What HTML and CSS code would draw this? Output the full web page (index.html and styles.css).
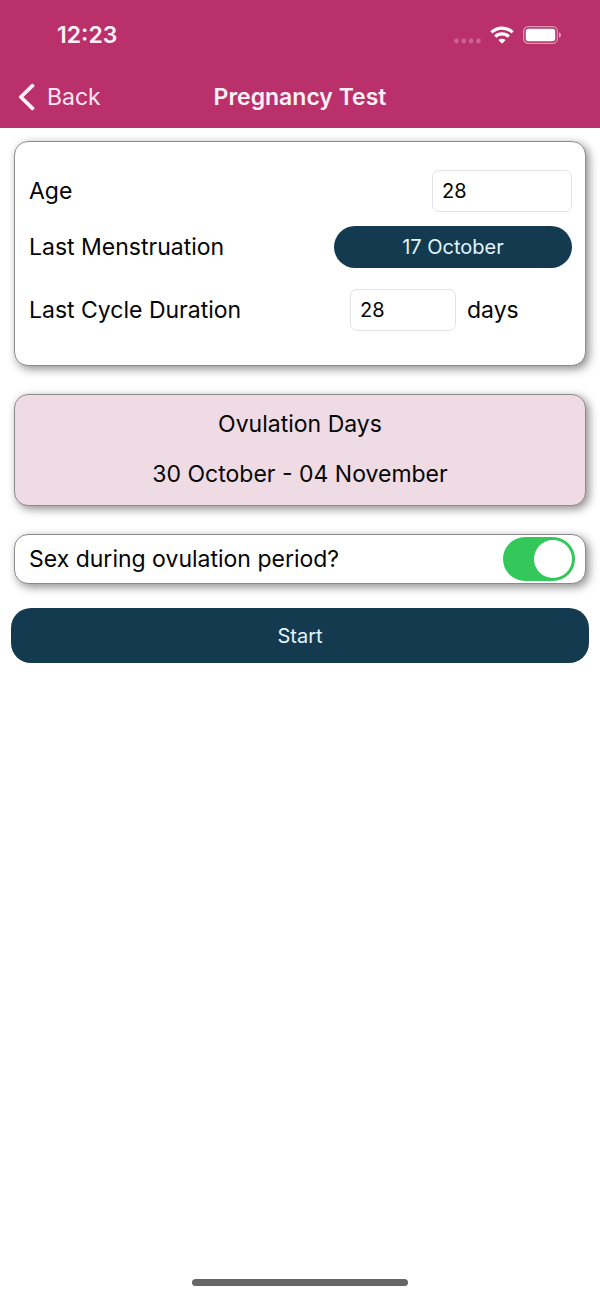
FILE: index.html
```html
<!DOCTYPE html>
<html lang="en">
<head>
<meta charset="utf-8">
<meta name="viewport" content="width=device-width, initial-scale=1">
<title>Pregnancy Test</title>
<link rel="stylesheet" href="styles.css">
</head>
<body>
<div class="screen">
  <header class="header">
    <div class="status">
      <span class="time">12:23</span>
      <div class="indicators">
        <svg class="signal" width="28" height="6" viewBox="0 0 28 6" aria-hidden="true"><g fill="#fff" opacity="0.25"><circle cx="3.500" cy="3" r="2.4"/><circle cx="10.800" cy="3" r="2.4"/><circle cx="18.100" cy="3" r="2.4"/><circle cx="25.400" cy="3" r="2.4"/></g></svg>
        <svg width="24" height="18" viewBox="0 0 24 18" aria-hidden="true"><g fill="none" stroke="#fff" stroke-width="3.2"><path d="M1.4 6.4a15.2 15.2 0 0 1 21.2 0"/><path d="M5.2 10.6a9.7 9.7 0 0 1 13.6 0"/></g><path d="M12 17.8L8.4 14.1a5.2 5.2 0 0 1 7.2 0Z" fill="#fff"/></svg>
        <svg width="39" height="18" viewBox="0 0 39 18" aria-hidden="true"><rect x="0.7" y="0.7" width="33.6" height="16.6" rx="4.6" fill="none" stroke="#fff" stroke-opacity="0.5" stroke-width="1.2"/><rect x="2.8" y="2.8" width="29.4" height="12.4" rx="2.6" fill="#fff"/><path d="M36 6.2c2.6 1 2.6 4.6 0 5.6Z" fill="#fff" opacity="0.55"/></svg>
      </div>
    </div>
    <nav class="navbar">
      <a class="back" href="#"><svg width="18" height="28" viewBox="0 0 18 28" aria-hidden="true"><path d="M15.500 2.700L3.800 14l11.700 11.300" fill="none" stroke="#fff0f7" stroke-width="3.8" stroke-linecap="round" stroke-linejoin="round"/></svg>Back</a>
      <h1 class="title">Pregnancy Test</h1>
    </nav>
  </header>
  <main class="content">
    <section class="card details">
      <div class="row">
        <label for="age">Age</label>
        <input class="field age" id="age" type="text" inputmode="numeric" value="28">
      </div>
      <div class="row">
        <label for="last">Last Menstruation</label>
        <button class="date" id="last" type="button">17 October</button>
      </div>
      <div class="row cycle">
        <label for="cycle">Last Cycle Duration</label>
        <div class="duration"><input class="field days" id="cycle" type="text" inputmode="numeric" value="28"><span>days</span></div>
      </div>
    </section>
    <section class="card result">
      <p>Ovulation Days</p>
      <p>30 October - 04 November</p>
    </section>
    <section class="card question">
      <label for="sex">Sex during ovulation period?</label>
      <input class="switch" id="sex" type="checkbox" role="switch" checked>
    </section>
    <button class="start" type="button">Start</button>
  </main>
  <div class="home"></div>
</div>
</body>
</html>
```

FILE: styles.css
```css
* {
  box-sizing: border-box;
}

body {
  margin: 0;
  background: #fff;
  color: #050505;
  font-family: Inter, "Liberation Sans", sans-serif;
  font-size: 23px;
  line-height: 28px;
}

button,
input {
  font-family: inherit;
}

.screen {
  display: flex;
  flex-direction: column;
  min-height: 100vh;
}

.header {
  background: #b9306b;
  color: #fff;
}

.status {
  display: flex;
  align-items: center;
  justify-content: space-between;
  height: 66px;
  padding: 3px 38px 0 57px;
}

.time {
  font-size: 23px;
  font-weight: 600;
  color: #fff0f7;
}

.indicators {
  display: flex;
  align-items: center;
  gap: 9px;
}

.signal {
  margin-top: 12px;
}

.navbar {
  display: grid;
  grid-template-columns: 1fr auto 1fr;
  align-items: center;
  height: 62px;
  padding: 0 17px;
}

.back {
  display: flex;
  align-items: center;
  gap: 12px;
  color: #ffe6f2;
  text-decoration: none;
}

.title {
  margin: 0;
  font-size: 23px;
  font-weight: 600;
  color: #fff0f7;
}

.content {
  display: flex;
  flex: 1;
  flex-direction: column;
  gap: 28px;
  padding: 13px 14px;
}

.card {
  border: 1px solid #8c8c8c;
  border-radius: 14px;
  background: #fff;
  box-shadow: 3px 3px 10px rgba(0, 0, 0, 0.45);
}

.details {
  display: flex;
  flex-direction: column;
  gap: 14px;
  padding: 28px 13px 34px 14px;
}

.row {
  display: flex;
  align-items: center;
  justify-content: space-between;
}

.cycle {
  margin-top: 7px;
}

.field {
  height: 42px;
  padding: 0 9px;
  border: 1px solid #e3e3e3;
  border-radius: 7px;
  background: #fff;
  color: #050505;
  font-size: 20px;
}

.age {
  width: 140px;
}

.duration {
  display: flex;
  align-items: center;
  gap: 11px;
  width: 222px;
}

.days {
  width: 106px;
}

.date {
  width: 238px;
  height: 42px;
  border: 0;
  border-radius: 21px;
  background: #143a50;
  color: #e2f4ff;
  font-size: 20px;
}

.result {
  display: flex;
  flex-direction: column;
  gap: 22px;
  padding: 15px 14px 17px;
  background: #eedbe4;
  text-align: center;
}

.result p {
  margin: 0;
}

.question {
  display: flex;
  align-items: center;
  justify-content: space-between;
  padding: 2px 10px 2px 14px;
}

.switch {
  display: flex;
  align-items: center;
  justify-content: flex-end;
  width: 72px;
  height: 44px;
  margin: 0;
  padding: 3px;
  border-radius: 22px;
  background: #d8d8dc;
  appearance: none;
}

.switch:checked {
  background: #34c759;
}

.switch::before {
  width: 38px;
  height: 38px;
  border-radius: 50%;
  background: #fff;
  content: "";
}

.switch:not(:checked) {
  justify-content: flex-start;
}

.start {
  height: 55px;
  margin: -4px -3px 0;
  border: 0;
  border-radius: 20px;
  background: #143a50;
  color: #e2f4ff;
  font-size: 20px;
}

.home {
  align-self: center;
  width: 36%;
  height: 7px;
  margin-bottom: 12px;
  border-radius: 4px;
  background: #666;
}
```
